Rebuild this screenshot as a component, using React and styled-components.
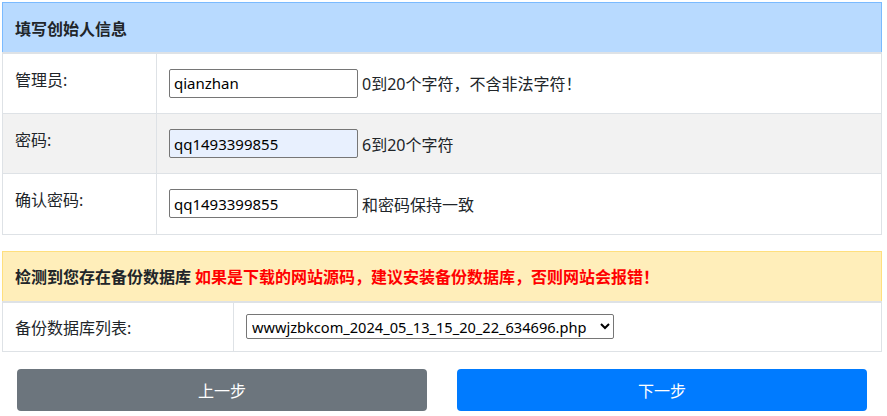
import React from 'react';
import styled, { createGlobalStyle } from 'styled-components';

const GlobalStyle = createGlobalStyle`
  html, body {
    margin: 0;
    padding: 0;
    background: #fff;
  }
  body {
    font-family: "Noto Sans", "Noto Sans CJK SC", sans-serif;
    color: #212529;
    font-size: 16px;
  }
`

const Page = styled.div`
  padding: 2px 5px 4px 2px;
  width: 880px;
`

const Table = styled.table`
  width: 100%;
  border-collapse: collapse;
  margin-bottom: ${p => p.$gap || 0}px;
`

const HeadCell = styled.th`
  text-align: left;
  font-weight: 700;
  font-size: 16px;
  height: 49px;
  padding: 0 12px;
  vertical-align: middle;
  background: ${p => p.$warn ? '#ffeeba' : '#b8daff'};
  border: 1px solid ${p => p.$warn ? '#ffdf7e' : '#7abaff'};
  border-bottom: 2px solid #dee2e6;
`

const Alert = styled.span`
  color: #ff0000;
  margin-left: 4px;
`

const Row = styled.tr`
  background: ${p => p.$shade ? '#f2f2f2' : '#fff'};
`

const LabelCell = styled.td`
  width: ${p => p.$w}px;
  box-sizing: border-box;
  height: ${p => p.$h}px;
  padding: ${p => p.$top}px 12px 0 12px;
  vertical-align: top;
  border: 1px solid #dee2e6;
  font-size: 16px;
  line-height: 22px;
`

const FieldCell = styled.td`
  padding: 0 12px;
  vertical-align: middle;
  border: 1px solid #dee2e6;
`

const Field = styled.div`
  display: flex;
  align-items: center;
  gap: 4px;
  font-size: 16px;
`

const Input = styled.input`
  box-sizing: border-box;
  width: 189px;
  height: 29px;
  border: 1px solid #767676;
  border-radius: 2px;
  padding: 0 4px;
  font-family: "Noto Sans", "Noto Sans CJK SC", sans-serif;
  font-size: 15px;
  color: #000;
  background: ${p => p.$filled ? '#e8f0fe' : '#fff'};
  outline: none;
`

const Select = styled.select`
  box-sizing: border-box;
  width: 368px;
  height: 25px;
  border: 1px solid #767676;
  border-radius: 2px;
  padding: 0 1px;
  font-family: "Noto Sans", "Noto Sans CJK SC", sans-serif;
  font-size: 14.6px;
  color: #000;
  background: #fff;
`

const Actions = styled.div`
  display: flex;
  gap: 30px;
  padding: 0 15px;
`

const Button = styled.button`
  flex: 1;
  height: 42px;
  border: none;
  border-radius: 4px;
  color: #fff;
  font-family: "Noto Sans CJK SC", sans-serif;
  font-size: 16px;
  background: ${p => p.$primary ? '#007bff' : '#6c757d'};
  cursor: pointer;
`

const fields = [
  { label: '管理员:', value: 'qianzhan', hint: '0到20个字符，不含非法字符！' },
  { label: '密码:', value: 'qq1493399855', hint: '6到20个字符', shade: true, filled: true },
  { label: '确认密码:', value: 'qq1493399855', hint: '和密码保持一致' },
]

export default function App() {
  return (
    <Page>
      <GlobalStyle />
      <Table $gap={16}>
        <thead>
          <tr>
            <HeadCell colSpan={2}>填写创始人信息</HeadCell>
          </tr>
        </thead>
        <tbody>
          {fields.map(f => (
            <Row key={f.label} $shade={f.shade}>
              <LabelCell $w={154} $h={60.4} $top={15}>{f.label}</LabelCell>
              <FieldCell>
                <Field>
                  <Input $filled={f.filled} defaultValue={f.value} />
                  <span>{f.hint}</span>
                </Field>
              </FieldCell>
            </Row>
          ))}
        </tbody>
      </Table>

      <Table $gap={17}>
        <thead>
          <tr>
            <HeadCell $warn colSpan={2}>
              检测到您存在备份数据库<Alert>如果是下载的网站源码，建议安装备份数据库，否则网站会报错！</Alert>
            </HeadCell>
          </tr>
        </thead>
        <tbody>
          <Row>
            <LabelCell $w={231} $h={50} $top={14}>备份数据库列表:</LabelCell>
            <FieldCell>
              <Select defaultValue="wwwjzbkcom_2024_05_13_15_20_22_634696.php">
                <option>wwwjzbkcom_2024_05_13_15_20_22_634696.php</option>
              </Select>
            </FieldCell>
          </Row>
        </tbody>
      </Table>

      <Actions>
        <Button>上一步</Button>
        <Button $primary>下一步</Button>
      </Actions>
    </Page>
  );
}
